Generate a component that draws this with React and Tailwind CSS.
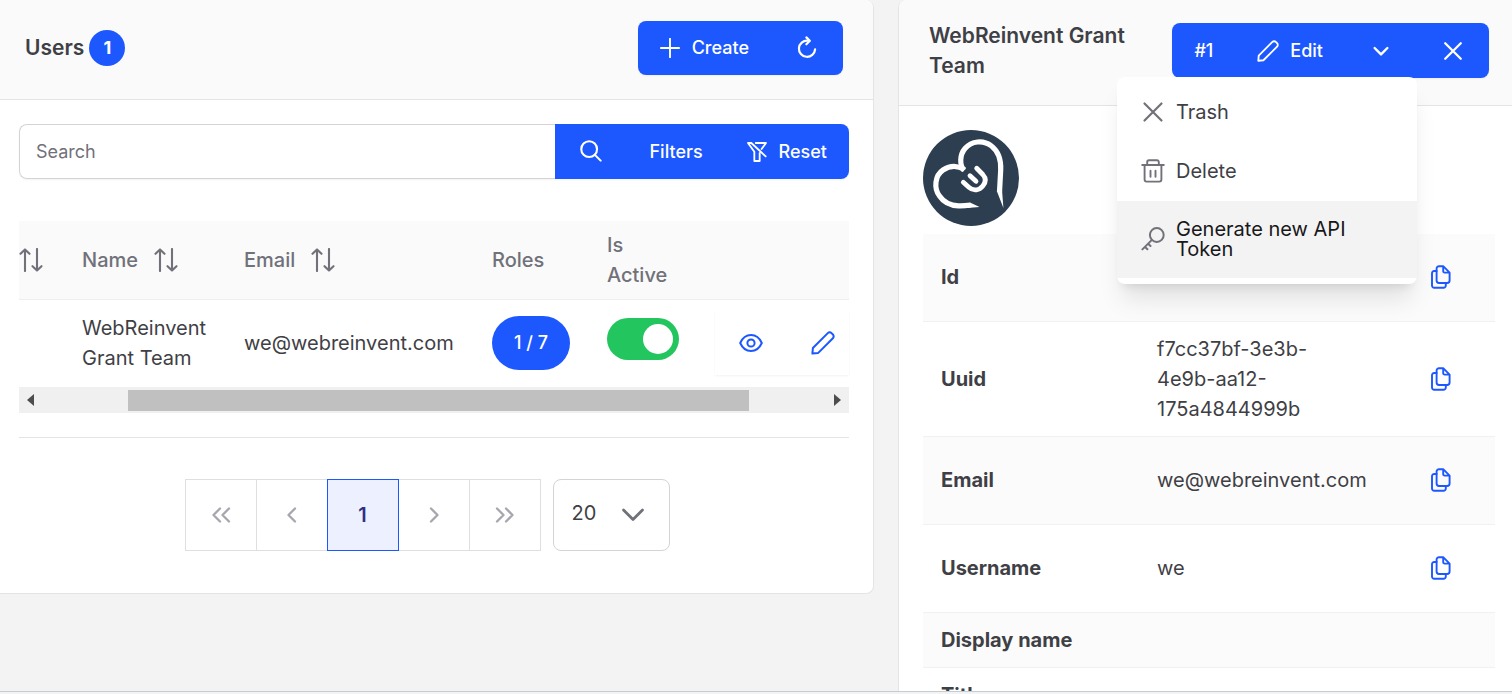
import React from "react";

function Icon({ className = "size-6", width = 2, children }) {
  return (
    <svg viewBox="0 0 24 24" fill="none" stroke="currentColor" strokeWidth={width} strokeLinecap="round" strokeLinejoin="round" className={className + " shrink-0"} aria-hidden="true">
      {children}
    </svg>
  );
}

const Plus = () => <Icon className="size-5" width={2.3}><path d="M12 1v22M1 12h22" /></Icon>;
const Refresh = () => (
  <Icon className="size-6" width={2.2}>
    <path d="M12.6 4.6A8.1 8.1 0 1 0 20.1 13.3" />
    <path d="M11.4 1.4l3.4 3.3-3.4 3.6" />
  </Icon>
);
const Search = () => <Icon className="size-[22px]" width={2.3}><circle cx="10" cy="10" r="8.600" /><path d="M16.500 16.500l6 6" /></Icon>;
const FilterSlash = () => (
  <Icon className="size-5" width={2.2}>
    <path d="M10.500 1.200h12.300l-5.300 7.300M1.200 1.200l7.600 10.400v11.200h6.400v-9.600M1.200 1.200h4l17.200 16" />
  </Icon>
);
const Pencil = ({ className }) => (
  <Icon className={className} width={2}>
    <path d="M1.4 22.6l.5-5.600L16.800 2.100a2.600 2.600 0 0 1 3.700 0l1.400 1.400a2.600 2.600 0 0 1 0 3.700L7 22.100z" />
  </Icon>
);
const Eye = () => (
  <Icon width={2}>
    <path d="M1.200 12C3.600 6.600 7.500 4 12 4s8.400 2.600 10.800 8c-2.400 5.400-6.300 8-10.800 8S3.600 17.400 1.200 12z" />
    <circle cx="12" cy="12" r="3.600" />
  </Icon>
);
const SortArrows = () => (
  <Icon width={2.1}>
    <path d="M6 23V1.500M1.500 5.800L6 1.400l4.500 4.400M18 1v21.500M13.500 18.200L18 22.600l4.500-4.400" />
  </Icon>
);
const Cross = ({ className, width = 1.8 }) => <Icon className={className} width={width}><path d="M3.500 3.500l17 17M20.500 3.500l-17 17" /></Icon>;
const Trash = () => (
  <Icon width={1.900}>
    <path d="M1.200 6h21.600M3.600 6v14.600a2 2 0 0 0 2 2h12.800a2 2 0 0 0 2-2V6M6.200 6V3a1.800 1.800 0 0 1 1.800-1.800h8A1.800 1.800 0 0 1 17.800 3v3M9.500 11.800v6M14.500 11.800v6" />
  </Icon>
);
const Key = () => (
  <Icon width={2}>
    <circle cx="15.800" cy="8" r="6.900" />
    <path d="M10.900 12.900L1.400 22.400M4 19.900l2.400 2.400M7.200 16.700l2.300 2.300" />
  </Icon>
);
const Copy = () => (
  <Icon width={1.900}>
    <path d="M14.200 1.200H10a2.400 2.400 0 0 0-2.400 2.400v12A2.400 2.400 0 0 0 10 18h8.200a2.400 2.400 0 0 0 2.400-2.400V7.600zM14.200 1.200v5a1.400 1.400 0 0 0 1.400 1.400h5" />
    <path d="M7.600 6H5.200a2.200 2.200 0 0 0-2.200 2.200v12.400a2.200 2.200 0 0 0 2.200 2.200h9.400a2.200 2.200 0 0 0 2.200-2.200V18" />
  </Icon>
);

function IconButton({ label, children }) {
  return (
    <button type="button" aria-label={label} className="flex h-[54px] w-[72px] shrink-0 items-center justify-center">
      {children}
    </button>
  );
}

function PageButton({ label, active, children }) {
  return (
    <button
      type="button"
      aria-label={label}
      className={
        active
          ? "relative -ml-px flex size-[72px] items-center justify-center border border-[#1d58ff] bg-[#edf1ff] text-xl font-semibold text-[#312e81]"
          : "-ml-px flex size-[72px] items-center justify-center border border-[#dfdfdf] text-[#a6a6ae]"
      }
    >
      {children}
    </button>
  );
}

function UsersPanel() {
  return (
    <section className="self-start overflow-hidden rounded-r-lg border-r border-b border-[#e4e4e7] bg-white">
      <header className="flex h-[100px] items-center justify-between border-b border-[#e4e4e7] bg-[#fafafa] pr-[30px] pb-1 pl-[25px]">
        <h1 className="flex items-center gap-[5px] text-[21px] font-semibold">
          Users
          <span className="flex size-9 items-center justify-center rounded-full bg-[#1d58ff] text-lg font-bold text-white">1</span>
        </h1>
        <div className="flex rounded-lg bg-[#1d58ff] text-white shadow-xs">
          <button type="button" className="flex h-[54px] items-center gap-3 px-[22px] text-lg font-medium">
            <Plus />
            Create
          </button>
          <IconButton label="Refresh"><Refresh /></IconButton>
        </div>
      </header>

      <div className="pt-6 pr-6 pb-[42px] pl-[19px]">
        <div className="flex h-[55px] rounded-lg text-lg font-medium text-white shadow-xs">
          <input aria-label="Search" placeholder="Search" className="min-w-0 flex-1 rounded-l-lg border border-r-0 border-[#d4d4d8] bg-white px-4 font-normal text-[#3f3f46] outline-none placeholder:text-[#71717a]" />
          <div className="flex rounded-r-lg bg-[#1d58ff]">
            <IconButton label="Run search"><Search /></IconButton>
            <button type="button" className="px-[22px]">Filters</button>
            <button type="button" className="flex items-center gap-3 px-[22px]">
              <FilterSlash />
              Reset
            </button>
          </div>
        </div>

        <table className="mt-[42px] w-full table-fixed border-collapse text-left text-xl">
          <colgroup>
            <col className="w-[45px]" />
            <col className="w-[162px]" />
            <col className="w-[248px]" />
            <col className="w-[115px]" />
            <col className="w-[126px]" />
            <col />
          </colgroup>
          <thead>
            <tr className="h-[78px] border-b border-[#efefef] bg-[#fafafa] leading-[30px] text-[#71717a]">
              <th aria-label="Sort"><SortArrows /></th>
              <th className="px-[18px] font-medium"><span className="flex items-center gap-4">Name <SortArrows /></span></th>
              <th className="px-[18px] font-medium"><span className="flex items-center gap-4">Email <SortArrows /></span></th>
              <th className="px-[18px] font-medium">Roles</th>
              <th className="px-[18px] font-medium"><span className="block w-16">Is Active</span></th>
              <th aria-label="Actions" />
            </tr>
          </thead>
          <tbody>
            <tr className="h-[88px] leading-[30px]">
              <td />
              <td className="pl-[18px] font-normal">WebReinvent<br />Grant Team</td>
              <td className="pl-[18px] font-normal">we@webreinvent.com</td>
              <td className="pl-[18px]">
                <button type="button" className="h-[54px] rounded-full bg-[#1d58ff] px-[22px] text-lg font-medium whitespace-nowrap text-white">1 / 7</button>
              </td>
              <td className="pb-2 pl-[18px]">
                <input
                  type="checkbox"
                  role="switch"
                  aria-label="Is Active"
                  defaultChecked
                  className="block h-[42px] w-[72px] appearance-none rounded-full bg-[#22c55e] p-[6px] before:ml-auto before:block before:size-[30px] before:rounded-full before:bg-white"
                />
              </td>
              <td>
                <div className="flex h-16 items-center overflow-hidden bg-white text-[#1d58ff] shadow-xs">
                  <IconButton label="View"><Eye /></IconButton>
                  <IconButton label="Edit row"><Pencil className="size-6" /></IconButton>
                </div>
              </td>
            </tr>
          </tbody>
        </table>

        <div className="flex h-[26px] items-center justify-between bg-[#f0f0f0] px-2 text-[#4d4d4d]">
          <svg viewBox="0 0 7 12" className="h-3 w-[7px]" fill="currentColor" aria-hidden="true"><path d="M7 0v12L0 6z" /></svg>
          <div className="mr-[85px] ml-[94px] h-[21px] flex-1 bg-[#c0c0c0]" />
          <svg viewBox="0 0 7 12" className="h-3 w-[7px]" fill="currentColor" aria-hidden="true"><path d="M0 0v12l7-6z" /></svg>
        </div>

        <nav aria-label="Pagination" className="mt-6 flex justify-center gap-3 border-t border-[#e4e4e7] pt-[41px] pr-[14px]">
          <div className="flex pl-px">
            <PageButton label="First page"><Icon className="size-6" width={2.3}><path d="M11 5.500L4.500 12l6.500 6.500M20 5.500L13.500 12l6.500 6.500" /></Icon></PageButton>
            <PageButton label="Previous page"><Icon className="size-6" width={2.3}><path d="M15 5.500L8.500 12l6.500 6.500" /></Icon></PageButton>
            <PageButton label="Page 1" active>1</PageButton>
            <PageButton label="Next page"><Icon className="size-6" width={2.3}><path d="M9 5.500l6.500 6.500L9 18.500" /></Icon></PageButton>
            <PageButton label="Last page"><Icon className="size-6" width={2.3}><path d="M4 5.500l6.500 6.500L4 18.500M13 5.500l6.500 6.500-6.500 6.500" /></Icon></PageButton>
          </div>
          <div className="grid h-[72px] w-[117px] items-center rounded-lg border border-[#d4d4d8] text-[#71717a]">
            <select aria-label="Rows per page" className="col-start-1 row-start-1 h-full w-full appearance-none rounded-lg bg-transparent pb-1 pl-[18px] text-xl font-normal text-[#3f3f46] outline-none">
              <option>20</option>
            </select>
            <Icon className="pointer-events-none col-start-1 row-start-1 mr-6 size-6 justify-self-end" width={2.800}><path d="M2.500 7l9.500 9.500L21.500 7" /></Icon>
          </div>
        </nav>
      </div>
    </section>
  );
}

const details = [
  ["Id", "", "h-[87px] bg-[#fbfbfb]", true],
  ["Uuid", "f7cc37bf-3e3b-4e9b-aa12-175a4844999b", "h-[115px]", true],
  ["Email", "we@webreinvent.com", "h-[88px] bg-[#fbfbfb]", true],
  ["Username", "we", "h-[88px]", true],
  ["Display name", "", "h-[55px] bg-[#fbfbfb]", false],
  ["Title", "", "h-[55px]", false],
];

function ActionsMenu() {
  return (
    <div role="menu" className="absolute top-[54px] right-[72px] w-[300px] rounded-lg bg-white pt-[5px] pb-[6px] text-xl leading-5 font-normal text-[#3f3f46] shadow-xl">
      <button type="button" role="menuitem" className="flex h-[59px] w-full items-center gap-[11px] px-6 text-left"><span className="text-[#71717a]"><Cross className="size-6" width={2.200} /></span>Trash</button>
      <button type="button" role="menuitem" className="flex h-[60px] w-full items-center gap-[11px] px-6 text-left"><span className="text-[#71717a]"><Trash /></span>Delete</button>
      <button type="button" role="menuitem" className="flex h-[77px] w-full items-center gap-[11px] bg-[#f3f3f3] px-6 pb-[2px] text-left text-[#18181b]"><span className="text-[#71717a]"><Key /></span>Generate new API Token</button>
    </div>
  );
}

function DetailPanel() {
  return (
    <section className="rounded-tl-lg border-l border-[#e4e4e7] bg-white">
      <header className="flex h-[106px] items-start justify-between rounded-tl-lg border-b border-[#e4e4e7] bg-[#fafafa] pr-[23px] pl-[30px]">
        <h2 className="mt-[21px] w-[220px] text-[21px] leading-[30px] font-semibold">WebReinvent Grant Team</h2>
        <div className="relative mt-[23px] flex shrink-0 text-lg font-medium">
          <div className="flex h-[55px] items-center rounded-lg bg-[#1d58ff] text-white shadow-xs">
            <button type="button" className="h-[54px] px-[22px]">#1</button>
            <button type="button" className="flex h-[54px] items-center gap-[11px] px-[22px]">
              <Pencil className="size-[22px]" />
              Edit
            </button>
            <IconButton label="More actions"><Icon className="size-[18px]" width={3.200}><path d="M3.500 8l8.500 8.500L20.500 8" /></Icon></IconButton>
            <IconButton label="Close"><Cross className="size-[22px]" width={2.500} /></IconButton>
          </div>
          <ActionsMenu />
        </div>
      </header>
      <div className="pt-6 pr-[17px] pl-6">
        <svg viewBox="0 0 96 96" className="size-24" role="img" aria-label="Avatar">
          <circle cx="48" cy="48" r="48" fill="#2d3e50" />
          <g fill="none" stroke="#fff" strokeWidth="5.200">
            <path d="M41 40.500C36.500 35 36.500 25 42 18.500c6.500-7.500 18-9 26.500-2.500C75.500 21.500 78.200 29 77.700 40L76.500 62" />
            <path d="M41.500 39.500C34 35 26 36 20 40c-8 5.500-9.500 18-3.500 26 4 6 10.500 9.500 19 9.800 4 .2 8-.2 12-.8" />
            <path d="M40.300 52.300l5.500 5c5 4.400 10.700 2.700 14-1.300 3.500-4.200 3.200-8 0-11.500L53.700 38.300M47 45.700l6 5.600" strokeLinecap="round" strokeWidth="4.800" />
          </g>
          <path d="M73.800 61h5.300L80.400 78zM47 72.400l9.500 4.600L44 78z" fill="#fff" />
        </svg>
        <table className="mt-2 w-full table-fixed border-collapse text-left text-xl leading-[30px]">
          <colgroup>
            <col className="w-[216px]" />
            <col />
            <col className="w-[108px]" />
          </colgroup>
          <tbody>
            {details.map(([name, value, row, copy]) => (
              <tr key={name} className={row + " border-b border-[#f1f1f1]"}>
                <th className="pl-[18px] font-bold">{name}</th>
                <td className="px-[18px] font-normal"><span className={name === "Uuid" ? "block w-44" : "block"}>{value}</span></td>
                <td className="pl-[18px] text-[#1d58ff]">{copy && <IconButton label={"Copy " + name}><Copy /></IconButton>}</td>
              </tr>
            ))}
          </tbody>
        </table>
      </div>
    </section>
  );
}

export default function App() {
  return (
    <div className="flex h-screen flex-col overflow-hidden bg-[#f3f3f3] font-['Inter',sans-serif] text-[#3f3f46]">
      <main className="grid min-h-0 flex-1 grid-cols-[874fr_614fr] gap-6 overflow-hidden">
        <UsersPanel />
        <DetailPanel />
      </main>
      <div className="h-[3px] shrink-0 border-t border-[#c4ccd4] bg-[#f1f3f5]" />
    </div>
  );
}
